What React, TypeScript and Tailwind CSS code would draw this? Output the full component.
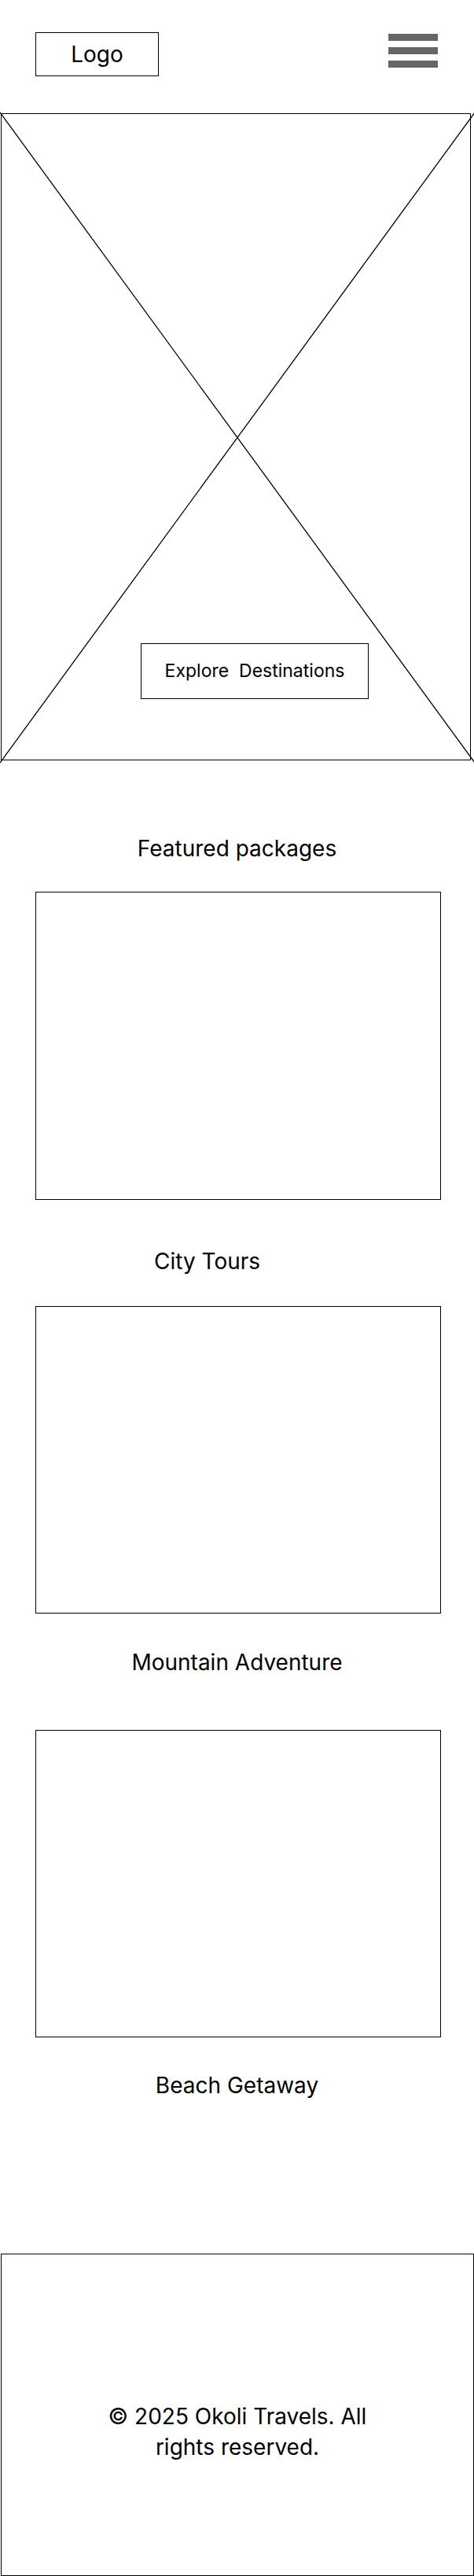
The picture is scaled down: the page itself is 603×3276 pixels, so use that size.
const packages = [
  { name: "City Tours", gap: "mt-[61px]", after: "mt-[40px]", off: "pr-[76px]" },
  { name: "Mountain Adventure", gap: "mt-[45px]", after: "mt-[69px]", off: "" },
  { name: "Beach Getaway", gap: "mt-[44px]", after: "", off: "" },
];

const Header = () => {
  return (
    <header className="flex items-start justify-between pt-[41px] pl-[45px] pr-[46px]">
      <div className="flex h-[56px] w-[157px] items-center justify-center border border-black text-[28px] leading-none">
        Logo
      </div>
      <button type="button" className="mt-[2px] flex w-[63px] flex-col gap-[8px]" aria-label="menu">
        <span className="h-[9px] w-full bg-[#666666]"></span>
        <span className="h-[9px] w-full bg-[#666666]"></span>
        <span className="h-[9px] w-full bg-[#666666]"></span>
      </button>
    </header>
  );
};

const Hero = () => {
  return (
    <section className="relative mt-[47px] ml-[1px] h-[823px] w-[598px] border border-black">
      {/* placeholder cross */}
      <svg
        className="absolute -left-[2px] -top-[2px] h-[827px] w-[604px] overflow-visible"
        viewBox="0 0 604 827"
        fill="none"
      >
        <line x1="0" y1="0" x2="604" y2="827" stroke="black" strokeWidth="1.3" />
        <line x1="604" y1="0" x2="0" y2="827" stroke="black" strokeWidth="1.3" />
      </svg>
      <div className="relative pt-[673px] pl-[177px]">
        <button
          type="button"
          className="flex h-[71px] w-[290px] items-center justify-center whitespace-pre border border-black bg-white text-[23px] leading-none"
        >
          {"Explore  Destinations"}
        </button>
      </div>
    </section>
  );
};

export default function App() {
  return (
    <div className="w-[603px] bg-white text-black font-['Inter',sans-serif]">
      <Header />
      <Hero />

      <main>
        <h2 className="mt-[95px] text-center text-[28px] font-normal leading-[34px]">Featured packages</h2>
        <div className="mt-[38px] ml-[45px] h-[392px] w-[516px] border border-black"></div>

        {packages.map((p, i) => (
          <div key={p.name}>
            <h3 className={`${p.gap} ${p.off} text-center text-[28px] font-normal leading-[34px]`}>{p.name}</h3>
            {i < packages.length - 1 && (
              <div className={`${p.after} ml-[45px] h-[391px] w-[516px] border border-black`}></div>
            )}
          </div>
        ))}
      </main>

      <footer className="mt-[197px] ml-[1px] h-[410px] w-[602px] border border-black pt-[187px]">
        <p className="mx-auto w-[360px] text-center text-[28px] leading-[39px]">
          © 2025 Okoli Travels. All rights reserved.
        </p>
      </footer>
    </div>
  );
}
